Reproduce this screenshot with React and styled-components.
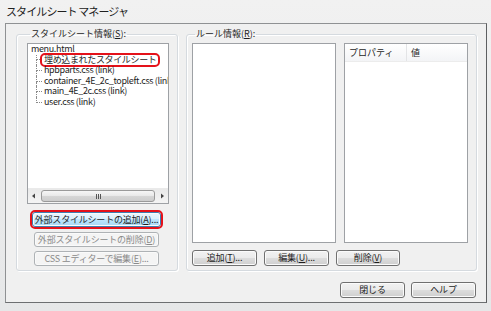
import styled, { createGlobalStyle } from "styled-components";

const Global = createGlobalStyle`
  html, body { margin: 0; padding: 0; background: #ececec; }
  * { box-sizing: border-box; }
`;

const Window = styled.div`
  width: 491px;
  height: 311px;
  overflow: hidden;
  background: linear-gradient(#f1f1f1, #e6e7e8);
  font-family: "Noto Sans CJK JP", "Noto Sans", sans-serif;
  color: #1e1e1e;
  display: flex;
  flex-direction: column;
`;

const Title = styled.div`
  height: 23px;
  padding: 4px 0 0 6px;
  font-size: 11px;
  line-height: 14px;
  letter-spacing: -0.9px;
  color: #202020;
`;

const Client = styled.div`
  margin: 0 4px 0 5px;
  height: 280px;
  border: 1px solid #8f9193;
  border-right-color: #5d5f61;
  border-bottom-color: #6d6f71;
  background: #f0f0f0;
  display: flex;
  flex-direction: column;
  padding: 4px 9px 0 10px;
`;

const Groups = styled.div`
  display: flex;
  gap: 8px;
  height: 243px;
`;

const Group = styled.fieldset`
  margin: 0;
  width: ${(p) => p.$w}px;
  border: 1px solid #d5dadf;
  border-radius: 3px;
  box-shadow: inset 1px 1px 0 #fff, 1px 1px 0 #fff;
  padding: ${(p) => p.$pad};
  display: flex;
  flex-direction: column;
  align-items: ${(p) => p.$align || "stretch"};
`;

const Legend = styled.legend`
  font-size: 9px;
  line-height: 12px;
  padding: 0 1px;
  margin-left: 3px;
`;

const ListBox = styled.div`
  width: ${(p) => p.$w}px;
  height: ${(p) => p.$h}px;
  background: #fff;
  border: 1px solid #9ea1a5;
  display: flex;
  flex-direction: column;
  overflow: hidden;
  flex: none;
`;

const TreeArea = styled.div`
  flex: 1;
  padding: 0 0 0 3px;
  font-size: 9px;
  letter-spacing: -0.35px;
  white-space: nowrap;
  overflow: hidden;
`;

const Row = styled.div`
  height: 10.6px;
  line-height: 10.6px;
  display: flex;
  align-items: stretch;
`;

const Children = styled.div`
  margin-left: 5px;
`;

const Guide = styled.div`
  width: 6px;
  flex: none;
  display: flex;
  flex-direction: column;
`;

const GuideUp = styled.div`
  flex: 1;
  border-left: 1px dotted #8a8a8a;
  border-bottom: 1px dotted #8a8a8a;
`;

const GuideDown = styled.div`
  flex: 1;
  border-left: 1px dotted ${(p) => (p.$last ? "transparent" : "#8a8a8a")};
`;

const Label = styled.span`
  padding: 0 2px;
  border-radius: 3px;
  ${(p) =>
    p.$marked &&
    `
    outline: 2px solid #e4121a;
    outline-offset: -0.5px;
    background: #fff;
  `}
`;

const HScroll = styled.div`
  height: 15px;
  flex: none;
  background: linear-gradient(#e9e9e9, #f4f4f4);
  border-top: 1px solid #eaeaea;
  display: flex;
  align-items: center;
  padding: 0 3px;
  gap: 4px;
`;

const Arrow = styled.svg`
  width: 6px;
  height: 6px;
  flex: none;
`;

const Thumb = styled.div`
  flex: 1;
  height: 12px;
  border: 1px solid #9a9a9a;
  border-radius: 3px;
  background: linear-gradient(#f6f6f6 0%, #e8e8e8 50%, #d6d6d6 51%, #cdcdcd 100%);
  display: flex;
  align-items: center;
  justify-content: center;
  gap: 1px;
`;

const Grip = styled.span`
  width: 1px;
  height: 5px;
  background: #555;
`;

const Button = styled.button`
  font-family: inherit;
  font-size: 9px;
  letter-spacing: -0.2px;
  line-height: 12px;
  width: ${(p) => p.$w}px;
  height: ${(p) => p.$h || 15}px;
  margin-top: ${(p) => p.$mt || 0}px;
  padding: 0;
  flex: none;
  border-radius: 3px;
  border: 1px solid #707070;
  color: #1e1e1e;
  background: linear-gradient(#f2f2f2 0%, #ebebeb 49%, #dddddd 50%, #cfcfcf 100%);
  box-shadow: inset 0 0 0 1px #fbfbfb;
  &:disabled {
    color: #8a8a8a;
    border-color: #aeb2b5;
    background: #f4f4f4;
    box-shadow: inset 0 0 0 1px #fafafa;
  }
  ${(p) =>
    p.$focus &&
    `
    border-color: #3c7fb1;
    background: linear-gradient(#eaf6fd 0%, #d9f0fc 49%, #bee6fd 50%, #a7d9f5 100%);
    outline: 2px solid #e4121a;
    outline-offset: 0px;
    border-radius: 3px;
  `}
`;

const Split = styled.div`
  display: flex;
  gap: 8px;
  padding-top: 3px;
`;

const ListView = styled(ListBox)`
  background: #fff;
`;

const Header = styled.div`
  height: 18px;
  display: flex;
  background: linear-gradient(#ffffff, #f3f4f6);
  border-bottom: 1px solid #ececec;
  font-size: 9px;
  line-height: 17px;
`;

const HeaderCell = styled.div`
  width: ${(p) => p.$w}px;
  padding-left: 4px;
  border-right: 1px solid ${(p) => (p.$sep ? "#e3e4e6" : "transparent")};
  flex: ${(p) => (p.$w ? "none" : 1)};
`;

const ButtonRow = styled.div`
  display: flex;
  gap: 7px;
  margin-top: 7px;
`;

const Footer = styled.div`
  display: flex;
  justify-content: flex-end;
  gap: 6px;
  padding-right: 1px;
  margin-top: 11px;
`;

const children = [
  "埋め込まれたスタイルシート",
  "hpbparts.css (link)",
  "container_4E_2c_topleft.css (link)",
  "main_4E_2c.css (link)",
  "user.css (link)",
];

export default function App() {
  return (
    <>
      <Global />
      <Window>
        <Title>スタイルシート マネージャ</Title>
        <Client>
          <Groups>
            <Group $w={163} $pad="0 0 4px 10px" $align="flex-start">
              <Legend>スタイルシート情報(<u>S</u>):</Legend>
              <Split style={{ paddingTop: 3 }}>
                <ListBox $w={142} $h={161}>
                  <TreeArea>
                    <Row>menu.html</Row>
                    <Children>
                      {children.map((c, i) => (
                        <Row key={c}>
                          <Guide>
                            <GuideUp />
                            <GuideDown $last={i === children.length - 1} />
                          </Guide>
                          <Label $marked={i === 0}>{c}</Label>
                        </Row>
                      ))}
                    </Children>
                  </TreeArea>
                  <HScroll>
                    <Arrow viewBox="0 0 6 6">
                      <path d="M4 0.5 L1 3 L4 5.5 Z" fill="#444" />
                    </Arrow>
                    <Thumb>
                      <Grip />
                      <Grip />
                      <Grip />
                    </Thumb>
                    <Arrow viewBox="0 0 6 6">
                      <path d="M2 0.5 L5 3 L2 5.5 Z" fill="#444" />
                    </Arrow>
                  </HScroll>
                </ListBox>
              </Split>
              <Button $w={129} $mt={8} $focus style={{ marginLeft: 5 }}>
                外部スタイルシートの追加(<u>A</u>)...
              </Button>
              <Button $w={125} $mt={5} disabled style={{ marginLeft: 7 }}>
                外部スタイルシートの削除(<u>D</u>)
              </Button>
              <Button $w={125} $mt={4} disabled style={{ marginLeft: 7 }}>
                CSS エディターで編集(<u>E</u>)...
              </Button>
            </Group>
            <Group $w={290} $pad="0 8px 4px 5px">
              <Legend>ルール情報(<u>R</u>):</Legend>
              <Split>
                <ListBox $w={144} $h={200} />
                <ListView $w={124} $h={200}>
                  <Header>
                    <HeaderCell $w={62} $sep>
                      プロパティ
                    </HeaderCell>
                    <HeaderCell>値</HeaderCell>
                  </Header>
                </ListView>
              </Split>
              <ButtonRow>
                <Button $w={65} $h={16}>
                  追加(<u>T</u>)...
                </Button>
                <Button $w={65} $h={16}>
                  編集(<u>U</u>)...
                </Button>
                <Button $w={64} $h={16}>
                  削除(<u>V</u>)
                </Button>
              </ButtonRow>
            </Group>
          </Groups>
          <Footer>
            <Button $w={65} $h={16}>
              閉じる
            </Button>
            <Button $w={65} $h={16}>
              ヘルプ
            </Button>
          </Footer>
        </Client>
      </Window>
    </>
  );
}
